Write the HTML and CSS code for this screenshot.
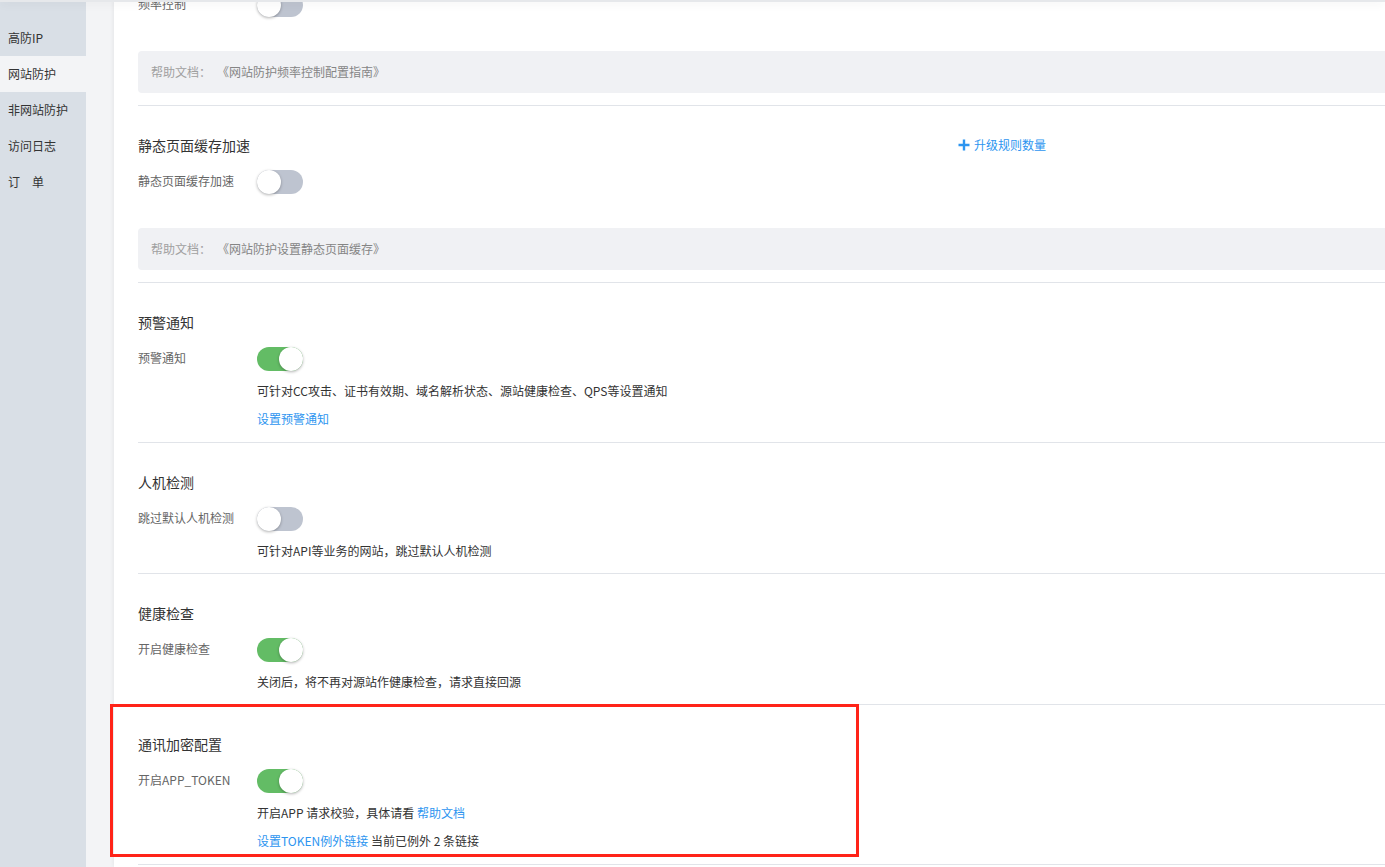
FILE: index.html
```html
<!DOCTYPE html>
<html lang="zh-CN">
<head>
<meta charset="utf-8">
<title>网站防护</title>
<link rel="stylesheet" href="styles.css">
</head>
<body>
<div class="topbar"></div>
<div class="app">
  <aside class="sidebar">
    <div class="nav-item">高防IP</div>
    <div class="nav-item active">网站防护</div>
    <div class="nav-item">非网站防护</div>
    <div class="nav-item">访问日志</div>
    <div class="nav-item">订　单</div>
  </aside>
  <main class="main">
    <div class="card">
      <section class="section first">
        <div class="row">
          <span class="label">频率控制</span>
          <span class="switch"></span>
        </div>
        <div class="help">
          <span class="help-key">帮助文档：</span><span class="help-doc">《网站防护频率控制配置指南》</span>
        </div>
      </section>

      <section class="section">
        <div class="title-row">
          <h3 class="title">静态页面缓存加速</h3>
          <a class="upgrade">
            <svg class="plus" viewBox="0 0 12 12" width="12" height="12"><path d="M6 0.5v11M0.5 6h11" stroke="#2d95f0" stroke-width="2.4" fill="none"/></svg>升级规则数量
          </a>
        </div>
        <div class="row">
          <span class="label">静态页面缓存加速</span>
          <span class="switch"></span>
        </div>
        <div class="help">
          <span class="help-key">帮助文档：</span><span class="help-doc">《网站防护设置静态页面缓存》</span>
        </div>
      </section>

      <section class="section">
        <h3 class="title">预警通知</h3>
        <div class="row">
          <span class="label">预警通知</span>
          <span class="switch on"></span>
        </div>
        <p class="desc">可针对CC攻击、证书有效期、域名解析状态、源站健康检查、QPS等设置通知</p>
        <p class="desc second"><a class="link">设置预警通知</a></p>
      </section>

      <section class="section">
        <h3 class="title">人机检测</h3>
        <div class="row">
          <span class="label">跳过默认人机检测</span>
          <span class="switch"></span>
        </div>
        <p class="desc">可针对API等业务的网站，跳过默认人机检测</p>
      </section>

      <section class="section">
        <h3 class="title">健康检查</h3>
        <div class="row">
          <span class="label">开启健康检查</span>
          <span class="switch on"></span>
        </div>
        <p class="desc">关闭后，将不再对源站作健康检查，请求直接回源</p>
      </section>

      <section class="section">
        <h3 class="title">通讯加密配置</h3>
        <div class="row">
          <span class="label">开启APP_TOKEN</span>
          <span class="switch on"></span>
        </div>
        <p class="desc">开启APP 请求校验，具体请看 <a class="link">帮助文档</a></p>
        <p class="desc second"><a class="link">设置TOKEN例外链接</a> 当前已例外 2 条链接</p>
      </section>
    </div>
  </main>
</div>
<div class="highlight"></div>
</body>
</html>
```

FILE: styles.css
```css
* {
  box-sizing: border-box;
}

html, body {
  margin: 0;
  padding: 0;
  height: 100%;
  overflow: hidden;
}

body {
  font-family: "Noto Sans CJK SC", "Noto Sans", sans-serif;
  font-size: 12px;
  color: #333;
  background: #f3f4f6;
}

.topbar {
  position: fixed;
  top: 0;
  left: 0;
  right: 0;
  height: 2px;
  background: #e6e8eb;
  box-shadow: 0 1px 10px rgba(0, 0, 0, 0.12);
  z-index: 5;
}

.app {
  display: flex;
  height: 100vh;
  overflow: hidden;
}

.sidebar {
  width: 86px;
  flex: none;
  background: #d9dfe6;
  padding-top: 20px;
}

.nav-item {
  height: 36px;
  line-height: 36px;
  padding-left: 8px;
  font-size: 12px;
  color: #333;
}

.nav-item.active {
  background: #f3f4f6;
}

.main {
  flex: 1;
  min-width: 0;
  padding-left: 28px;
  background: #f3f4f6;
}

.card {
  display: flow-root;
  background: #fff;
  min-height: 100%;
  padding-left: 24px;
  box-shadow: -1px 0 4px rgba(0, 0, 0, 0.06);
}

.section {
  padding: 29px 0 12px;
  border-bottom: 1px solid #e1e4e9;
}

.section.first {
  padding-top: 0;
  margin-top: -7px;
}

.title-row {
  display: flex;
  align-items: center;
}

.title {
  margin: 0;
  font-size: 14px;
  line-height: 20px;
  font-weight: normal;
  color: #333;
}

.title-row .title {
  width: 820px;
}

.upgrade {
  display: flex;
  align-items: center;
  gap: 4px;
  color: #2d95f0;
  font-size: 12px;
  line-height: 20px;
  cursor: pointer;
}

.plus {
  display: block;
}

.row {
  display: flex;
  align-items: flex-start;
  margin-top: 15px;
}

.section.first .row {
  margin-top: 0;
}

.label {
  width: 119px;
  flex: none;
  line-height: 22px;
  color: #666;
  font-size: 12px;
}

.switch {
  position: relative;
  display: block;
  width: 46px;
  height: 24px;
  border-radius: 12px;
  background: #bec4d0;
}

.switch::after {
  content: "";
  position: absolute;
  top: 0;
  left: 0;
  width: 24px;
  height: 24px;
  border-radius: 50%;
  background: #fff;
  box-shadow: 0 1px 3px rgba(0, 0, 0, 0.3);
}

.switch.on {
  background: #63bc65;
}

.switch.on::after {
  left: 22px;
}

.help {
  margin-top: 34px;
  height: 42px;
  line-height: 42px;
  padding-left: 13px;
  background: #f0f1f4;
  border-radius: 4px 0 0 4px;
  font-size: 12px;
}

.help-key {
  color: #a0a0a0;
}

.help-doc {
  color: #858585;
  margin-left: 12px;
}

.desc {
  margin: 10px 0 0 119px;
  line-height: 20px;
  font-size: 12px;
  color: #333;
}

.desc.second {
  margin-top: 8px;
  margin-bottom: 1px;
}

.link {
  color: #2d95f0;
  text-decoration: none;
  cursor: pointer;
}

.highlight {
  position: fixed;
  left: 110px;
  top: 704px;
  width: 749px;
  height: 153px;
  border: 3px solid #ff2318;
  z-index: 10;
  pointer-events: none;
}
```
